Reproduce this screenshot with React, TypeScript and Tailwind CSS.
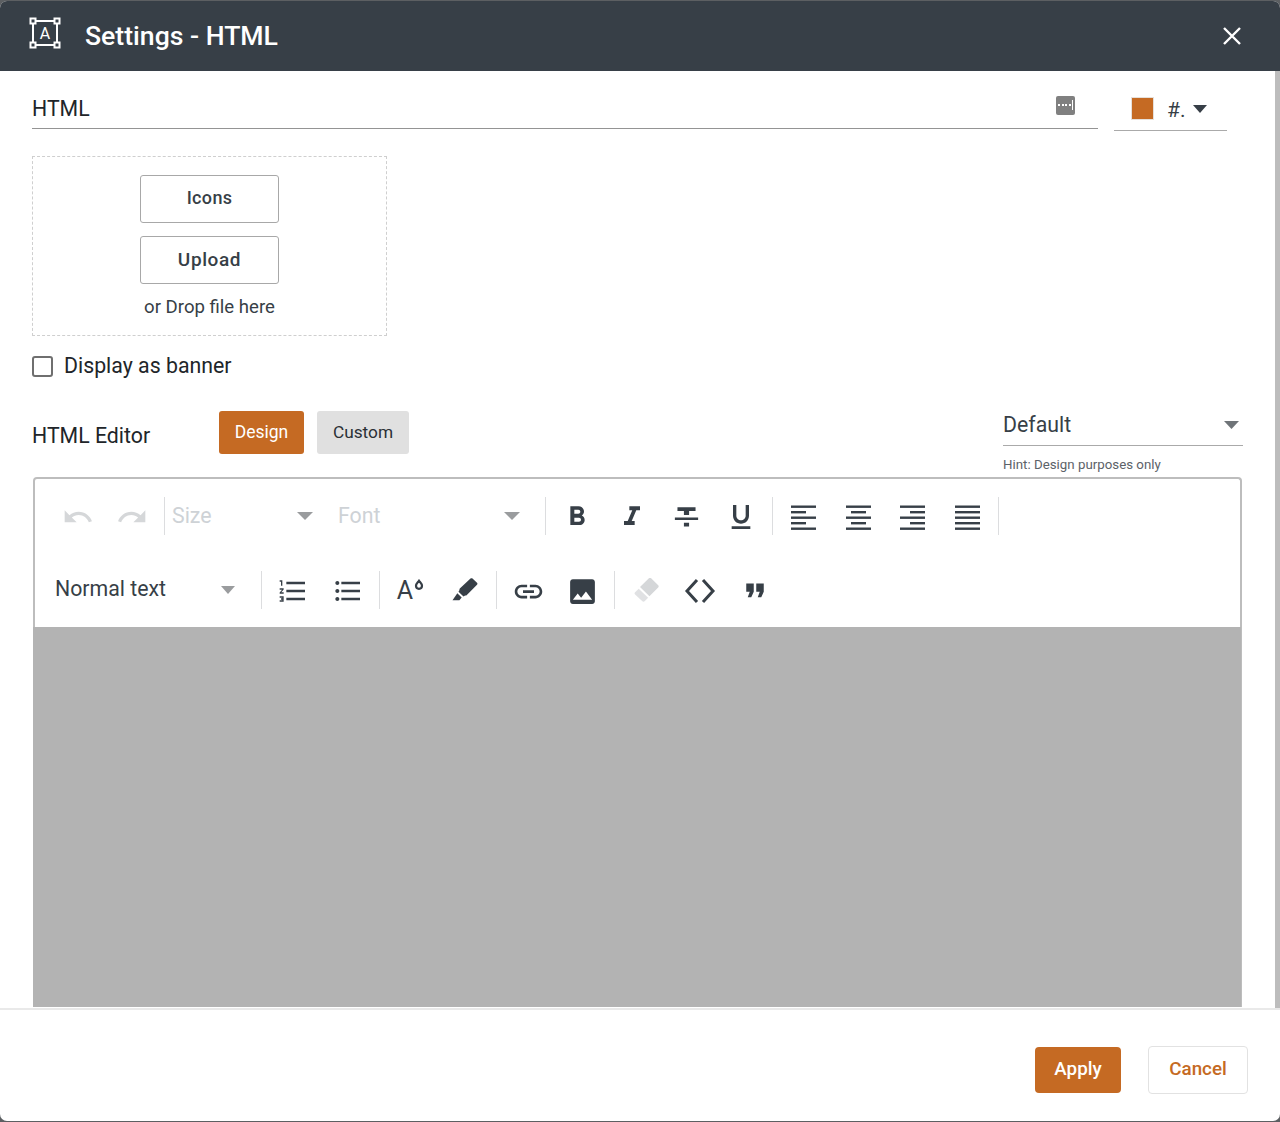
import React from "react";

const D = "#373f47";
const L = "#d5d7d9";

function Ic({ d, c = D, s = 30, vb = "0 0 24 24" }: { d: string; c?: string; s?: number; vb?: string }) {
  return (
    <svg width={s} height={s} viewBox={vb} fill={c}>
      <path d={d} />
    </svg>
  );
}

function Btn({ children }: { children: React.ReactNode }) {
  return <div className="w-[54.5px] h-[38px] pt-[2px] flex items-center justify-center shrink-0">{children}</div>;
}

function Sep() {
  return <div className="w-px h-[38px] bg-[#dcdddf] shrink-0" />;
}

function Caret({ c = "#9a9c9e", w = 16 }: { c?: string; w?: number }) {
  return (
    <svg width={w} height="8" viewBox="0 0 16 8" fill={c} preserveAspectRatio="none">
      <path d="M0 0h16L8 8z" />
    </svg>
  );
}

function Align({ lines }: { lines: [number, number][] }) {
  return (
    <svg width="26" height="26" viewBox="0 0 26 26" fill={D}>
      {lines.map(([x, w], i) => (
        <rect key={i} x={x} y={1.5 + i * 5.5} width={w} height="2.4" />
      ))}
    </svg>
  );
}

export default function App() {
  return (
    <div className="w-[1280px] h-[1122px] bg-[#5c5f62] py-px text-[#212529] font-['Roboto',sans-serif]">
      <div className="h-full flex flex-col bg-white rounded-[7px] overflow-hidden">
        <header className="h-[70px] shrink-0 bg-[#373f47] flex items-center pl-[29px] pr-[36px] text-white">
          <svg width="32" height="32" viewBox="0 0 32 32" fill="none" stroke="#fff" strokeWidth="2" className="mb-[6px]">
            <rect x="4" y="4" width="24" height="24" />
            <rect x="1.5" y="1.5" width="5" height="5" fill="#373f47" />
            <rect x="25.5" y="1.5" width="5" height="5" fill="#373f47" />
            <rect x="1.5" y="25.5" width="5" height="5" fill="#373f47" />
            <rect x="25.5" y="25.5" width="5" height="5" fill="#373f47" />
            <text x="16" y="21.5" textAnchor="middle" fontSize="16" fontFamily="Roboto" fill="#fff" stroke="none">A</text>
          </svg>
          <h1 className="ml-[24px] text-[26.6px] font-medium leading-none flex-1">Settings - HTML</h1>
          <svg width="24" height="24" viewBox="0 0 24 24" stroke="#fff" strokeWidth="2.4" fill="none" className="mb-[1px]">
            <path d="M4 4l16 16M20 4L4 20" />
          </svg>
        </header>

        <div className="flex-1 flex min-h-0">
          <main className="flex-1 min-w-0 overflow-hidden pl-[32px] pr-[32px]">
            <div className="flex h-[60px] items-start">
              <div className="w-[1066px] h-[58px] border-b border-[#949494] flex items-center justify-between pt-[18px] pr-[23px]">
                <span className="text-[21.3px] leading-none">HTML</span>
                <span className="w-[19px] h-[19px] rounded-[2px] bg-[#808080] flex items-center justify-center gap-[1.5px] mb-[7px]">
                  <i className="w-[2px] h-[2px] bg-white" />
                  <i className="w-[2px] h-[2px] bg-white" />
                  <i className="w-[2px] h-[2px] bg-white" />
                  <i className="w-[2px] h-[2px] bg-white" />
                  <i className="w-px h-[10px] bg-white" />
                </span>
              </div>
              <div className="ml-[16px] w-[113px] h-[60px] border-b border-[#aaa] flex items-center pl-[17px] pt-[16px]">
                <span className="w-[23px] h-[23px] bg-[#c56a23] border border-[#e6e0da]" />
                <span className="ml-[13px] mt-[3px] text-[21px] leading-none text-[#373f47]">#.</span>
                <span className="ml-[8px]"><Caret c={D} w={14} /></span>
              </div>
            </div>

            <div className="mt-[25px] w-[355px] h-[180px] border border-dashed border-[#cfcfcf] flex flex-col items-center pt-[18px]">
              <button className="w-[139px] h-[48px] pb-[3px] rounded-[3px] border border-[#a8a8a8] text-[18px] font-medium tracking-[0.35px] text-[#373f47]">Icons</button>
              <button className="mt-[13px] w-[139px] h-[48px] rounded-[3px] border border-[#a8a8a8] text-[19px] font-medium tracking-[0.6px] text-[#373f47]">Upload</button>
              <span className="mt-[12px] text-[18.6px] leading-[22px] text-[#373f47]">or Drop file here</span>
            </div>

            <label className="mt-[20px] flex items-center h-[21px]">
              <span className="w-[21px] h-[21px] rounded-[3px] border-2 border-[#6f6f6f]" />
              <span className="ml-[11px] mb-[2px] text-[21.3px] leading-none">Display as banner</span>
            </label>

            <div className="mt-[34px] h-[66px] flex items-start">
              <span className="w-[187px] pt-[14px] text-[21.3px] leading-[22px]">HTML Editor</span>
              <button className="w-[85px] h-[43px] rounded-[3px] bg-[#c56a23] text-white text-[17.5px]">Design</button>
              <button className="ml-[13px] w-[92px] h-[43px] rounded-[3px] bg-[#e0e0e0] text-[#2b3036] text-[17.3px]">Custom</button>
              <div className="ml-[594px] w-[240px]">
                <div className="h-[35px] border-b border-[#aaa] flex items-start justify-between pr-[4px]">
                  <span className="text-[21.3px] leading-[28px] text-[#373f47]">Default</span>
                  <span className="mt-[10px]"><Caret c="#6f7478" w={15} /></span>
                </div>
                <div className="mt-[11px] text-[13.3px] leading-[16px] text-[#5c6268]">Hint: Design purposes only</div>
              </div>
            </div>

            <div className="ml-px w-[1209px] h-[530px] rounded-t-[4px] border-2 border-b-0 border-[#bdbdbd] flex flex-col">
              <div className="h-[148px] shrink-0 text-[21.3px]">
                <div className="h-[74px] flex items-center pl-[15.5px]">
                  <Btn><Ic s={32} c={L} d="M12.5 8c-2.65 0-5.05.99-6.9 2.6L2 7v9h9l-3.62-3.62c1.39-1.16 3.16-1.88 5.12-1.88 3.54 0 6.55 2.31 7.6 5.5l2.37-.78C21.08 11.03 17.15 8 12.5 8z" /></Btn>
                  <Btn><Ic s={32} c={L} d="M18.4 10.6C16.55 8.99 14.15 8 11.5 8c-4.65 0-8.58 3.03-9.96 7.22L3.9 16c1.05-3.19 4.05-5.5 7.6-5.5 1.95 0 3.73.72 5.12 1.88L13 16h9V7l-3.6 3.6z" /></Btn>
                  <span className="w-[4.5px]" />
                  <Sep />
                  <div className="w-[166px] flex items-center justify-between pl-[7px] pr-[18px] text-[#ced2d6]"><span>Size</span><Caret /></div>
                  <div className="w-[214px] flex items-center justify-between pl-[7px] pr-[25px] text-[#ced2d6]"><span>Font</span><Caret /></div>
                  <Sep />
                  <span className="w-[4px]" />
                  <Btn><Ic s={32} d="M15.6 10.79c.97-.67 1.65-1.77 1.65-2.79 0-2.26-1.75-4-4-4H7v14h7.04c2.09 0 3.71-1.7 3.71-3.79 0-1.52-.86-2.82-2.15-3.42zM10 6.5h3c.83 0 1.5.67 1.5 1.5s-.67 1.5-1.5 1.5h-3v-3zm3.5 9H10v-3h3.5c.83 0 1.5.67 1.5 1.5s-.67 1.5-1.5 1.5z" /></Btn>
                  <Btn><Ic s={32} d="M10 4v3h2.21l-3.42 8H6v3h8v-3h-2.21l3.42-8H18V4z" /></Btn>
                  <Btn><Ic s={31} d="M10 19h4v-3h-4v3zM5 4v3h5v3h4V7h5V4H5zM3 14h18v-2H3v2z" /></Btn>
                  <Btn><Ic s={32} d="M12 17c3.31 0 6-2.69 6-6V3h-2.5v8c0 1.93-1.57 3.5-3.5 3.5S8.5 12.93 8.5 11V3H6v8c0 3.31 2.69 6 6 6zm-7 2v2h14v-2H5z" /></Btn>
                  <span className="w-[4px]" />
                  <Sep />
                  <span className="w-[4px]" />
                  <Btn><Align lines={[[0, 25], [0, 15], [0, 25], [0, 15], [0, 25]]} /></Btn>
                  <Btn><Align lines={[[0, 25], [5, 15], [0, 25], [5, 15], [0, 25]]} /></Btn>
                  <Btn><Align lines={[[0, 25], [10, 15], [0, 25], [10, 15], [0, 25]]} /></Btn>
                  <Btn><Align lines={[[0, 25], [0, 25], [0, 25], [0, 25], [0, 25]]} /></Btn>
                  <span className="w-[3px]" />
                  <Sep />
                </div>
                <div className="h-[74px] flex items-center pl-[20px]">
                  <div className="w-[201px] flex items-center justify-between pr-[21px] text-[#373f47]"><span className="-mt-[2px]">Normal text</span><Caret w={14} /></div>
                  <span className="w-[5px]" />
                  <Sep />
                  <span className="w-[3.75px]" />
                  <Btn><Ic s={32} d="M2 17h2v.5H3v1h1v.5H2v1h3v-4H2v1zm1-9h1V4H2v1h1v3zm-1 3h1.8L2 13.1v.9h3v-1H3.2L5 10.9V10H2v1zm5-6v2h14V5H7zm0 14h14v-2H7v2zm0-6h14v-2H7v2z" /></Btn>
                  <Btn><Ic s={32} d="M4 10.5c-.83 0-1.5.67-1.5 1.5s.67 1.5 1.5 1.5 1.5-.67 1.5-1.5-.67-1.5-1.5-1.5zm0-6c-.83 0-1.5.67-1.5 1.5S3.17 7.5 4 7.5 5.5 6.83 5.5 6 4.83 4.5 4 4.5zm0 12c-.83 0-1.5.68-1.5 1.5s.68 1.5 1.5 1.5 1.5-.68 1.5-1.5-.67-1.5-1.5-1.5zM7 19h14v-2H7v2zm0-6h14v-2H7v2zm0-8v2h14V5H7z" /></Btn>
                  <span className="w-[3.75px]" />
                  <Sep />
                  <span className="w-[3.75px]" />
                  <Btn>
                    <span className="flex items-start text-[#373f47] -mt-px">
                      <span className="text-[25px] leading-[25px]">A</span>
                      <svg width="10" height="11" viewBox="0 0 10 11" fill="none" stroke={D} strokeWidth="2.2" className="mt-[1px] ml-[1px]"><path d="M5 1.8C6.2 3.6 8 4.8 8 6.8A3 3 0 0 1 2 6.8C2 4.8 3.8 3.6 5 1.8z" /></svg>
                    </span>
                  </Btn>
                  <Btn>
                    <svg width="28" height="28" viewBox="0 0 28 28" fill={D}>
                      <path d="M19.5 1.5c.6-.5 1.4-.5 2 0l4.5 4.2c.6.6.6 1.4 0 2L15.6 18.2c-.4.4-1 .5-1.5.3l-1.6 1-5-4.8 1-1.7c-.2-.5-.1-1.1.3-1.5z" />
                      <path d="M6.3 16.2l4.4 4.2-2.3 2.9H1.5z" />
                    </svg>
                  </Btn>
                  <span className="w-[3.75px]" />
                  <Sep />
                  <span className="w-[3.75px]" />
                  <Btn><Ic s={33} d="M3.9 12c0-1.71 1.39-3.1 3.1-3.1h4V7H7c-2.76 0-5 2.24-5 5s2.24 5 5 5h4v-1.9H7c-1.71 0-3.1-1.39-3.1-3.1zM8 13h8v-2H8v2zm9-6h-4v1.9h4c1.71 0 3.1 1.39 3.1 3.1s-1.39 3.1-3.1 3.1h-4V17h4c2.76 0 5-2.24 5-5s-2.24-5-5-5z" /></Btn>
                  <Btn><Ic s={33} d="M21 19V5c0-1.1-.9-2-2-2H5c-1.1 0-2 .9-2 2v14c0 1.1.9 2 2 2h14c1.1 0 2-.9 2-2zM8.5 13.5l2.5 3.01L14.5 12l4.5 6H5l3.5-4.5z" /></Btn>
                  <span className="w-[3.75px]" />
                  <Sep />
                  <span className="w-[3.75px]" />
                  <Btn>
                    <svg width="30" height="30" viewBox="0 0 28 28" fill={L}>
                      <path d="M16.7 2.2c.6-.6 1.5-.6 2.1 0l6.6 6.4c.6.6.6 1.5 0 2.1l-8.2 8.1-8.8-8.5z" />
                      <path d="M7.2 11.8l8.800 8.500-3.300 3.300c-.6.6-1.500.6-2.100 0L3.800 17.200c-.6-.6-.6-1.500 0-2.100z" opacity="0.75" />
                    </svg>
                  </Btn>
                  <Btn>
                    <svg width="32" height="26" viewBox="0 0 32 26" fill="none" stroke={D} strokeWidth="3">
                      <path d="M13 2L3 13l10 11M19 2l10 11-10 11" />
                    </svg>
                  </Btn>
                  <Btn><Ic s={30} d="M5 6h6v6.5l-2 4.5H6.200l1.600-4.500H5zm8 0h6v6.500l-2 4.500h-2.800l1.600-4.500H13z" /></Btn>
                </div>
              </div>
              <div className="flex-1 bg-[#b3b3b3] -ml-[2px] -mr-px" />
            </div>
          </main>
          <div className="w-[5px] shrink-0 bg-[#bdbdbd]" />
        </div>

        <footer className="h-[113px] shrink-0 border-t-2 border-[#e9e9e9] flex items-start justify-end pt-[36px] pr-[32px]">
          <button className="mt-px w-[86px] h-[46px] pb-[2px] rounded-[4px] bg-[#c56a23] text-white text-[18.8px] font-medium">Apply</button>
          <button className="ml-[27px] w-[100px] h-[48px] pb-[2px] rounded-[4px] border border-[#e2e2e2] text-[#c56a23] text-[18.8px] font-medium">Cancel</button>
        </footer>
      </div>
    </div>
  );
}
